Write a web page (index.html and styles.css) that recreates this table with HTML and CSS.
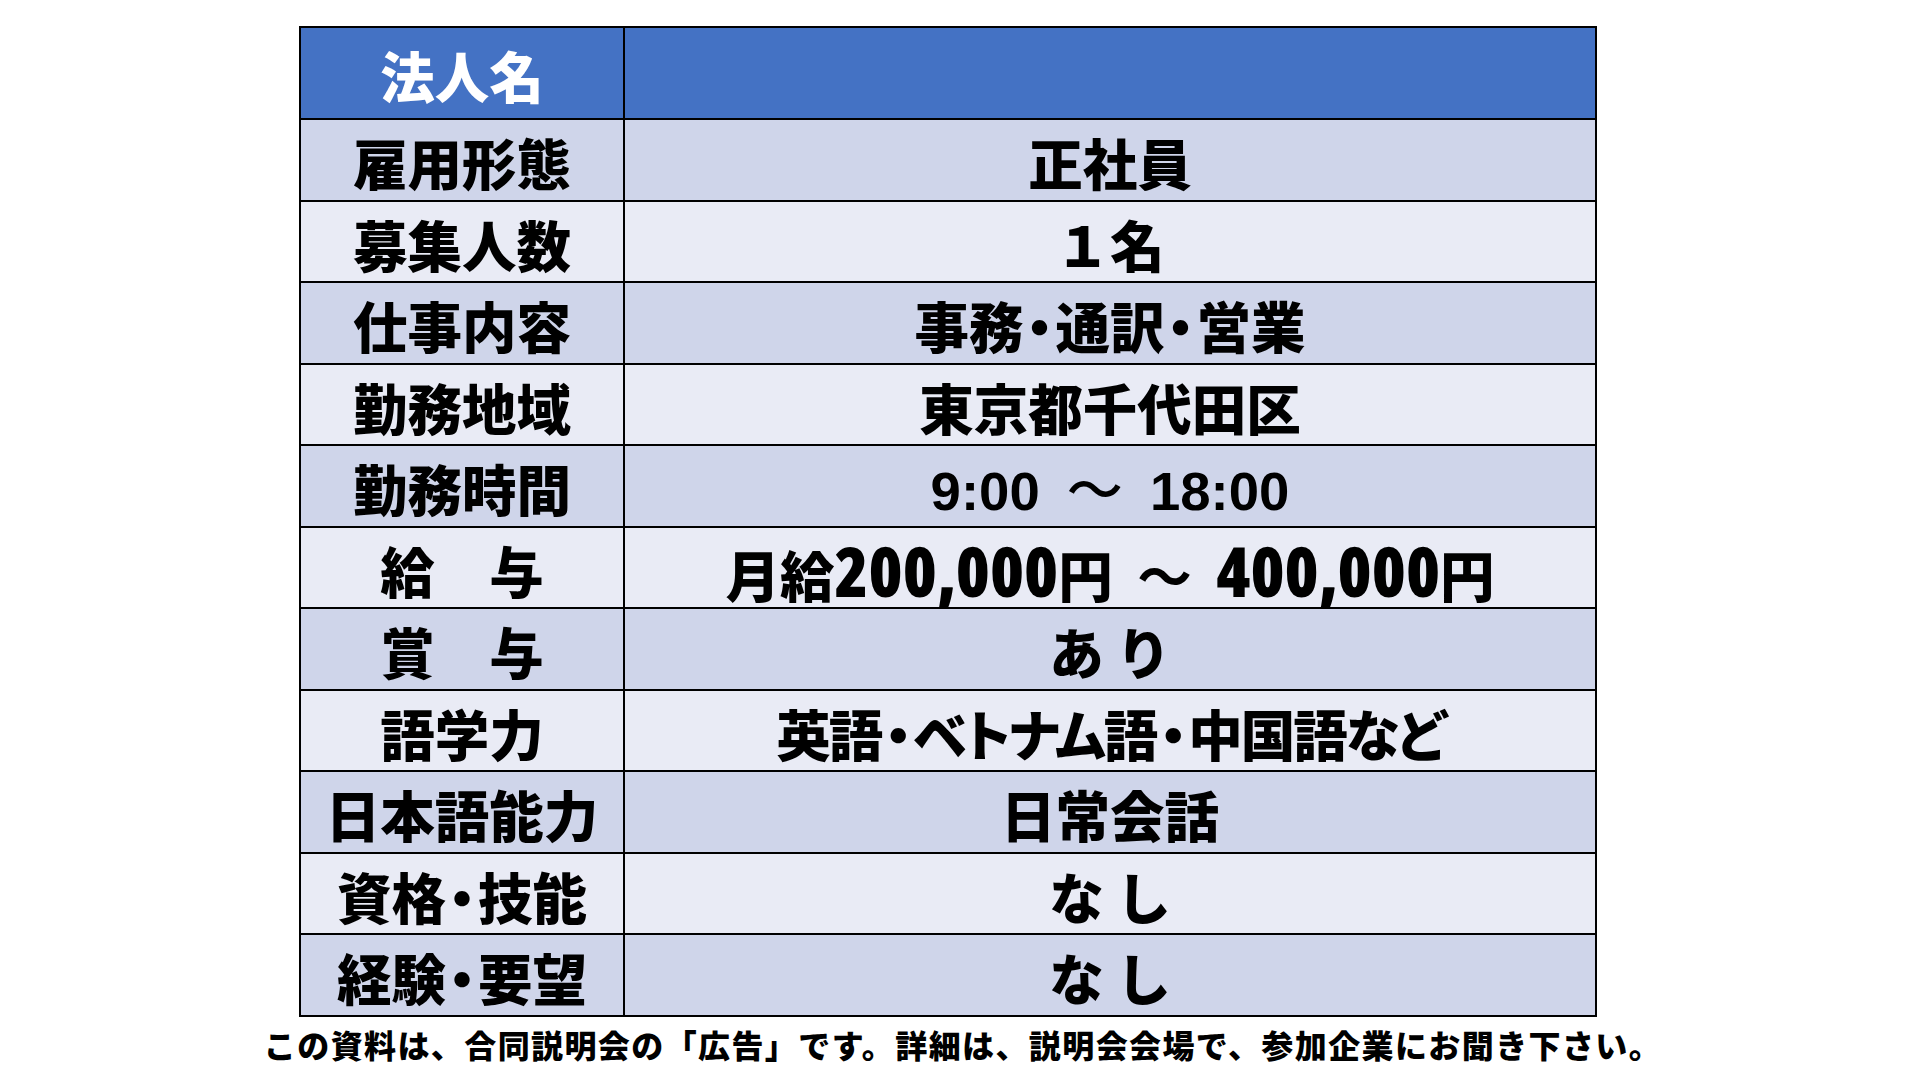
FILE: index.html
```html
<!DOCTYPE html>
<html lang="ja">
<head>
<meta charset="utf-8">
<title>求人票</title>
<link rel="stylesheet" href="styles.css">
</head>
<body>
<div class="page">
  <table class="job">
    <tr class="head">
      <th class="label">法人名</th>
      <th class="value"></th>
    </tr>
    <tr class="odd"><td class="label">雇用形態</td><td class="value">正社員</td></tr>
    <tr class="even"><td class="label">募集人数</td><td class="value">１名</td></tr>
    <tr class="odd"><td class="label">仕事内容</td><td class="value">事務<span class="dot">・</span>通訳<span class="dot">・</span>営業</td></tr>
    <tr class="even"><td class="label">勤務地域</td><td class="value">東京都千代田区</td></tr>
    <tr class="odd"><td class="label">勤務時間</td><td class="value time">9:00 <span class="wave">～</span> 18:00</td></tr>
    <tr class="even"><td class="label">給　与</td><td class="value">月給<span class="num">200,000</span>円 <span class="wave2">～</span> <span class="num">400,000</span>円</td></tr>
    <tr class="odd"><td class="label">賞　与</td><td class="value">あ り</td></tr>
    <tr class="even"><td class="label">語学力</td><td class="value prop">英語<span class="dot">・</span>ベトナム語<span class="dot">・</span>中国語など</td></tr>
    <tr class="odd"><td class="label">日本語能力</td><td class="value">日常会話</td></tr>
    <tr class="even"><td class="label">資格<span class="dot">・</span>技能</td><td class="value">な し</td></tr>
    <tr class="odd"><td class="label">経験<span class="dot">・</span>要望</td><td class="value">な し</td></tr>
  </table>
  <p class="note">この資料は、合同説明会の「広告」です。詳細は、説明会会場で、参加企業にお聞き下さい。</p>
</div>
</body>
</html>
```

FILE: styles.css
```css
html, body {
  margin: 0;
  padding: 0;
  background: #ffffff;
}

body {
  width: 1920px;
  height: 1080px;
  overflow: hidden;
  font-family: "Noto Sans CJK JP", "Noto Sans", sans-serif;
  color: #000000;
}

.page {
  padding-top: 26px;
}

.job {
  margin-left: 299px;
  width: 1298px;
  border-collapse: collapse;
  table-layout: fixed;
}

.job th,
.job td {
  border: 2px solid #000000;
  padding: 5px 0 0 0;
  text-align: center;
  vertical-align: middle;
  font-size: 54.5px;
  font-weight: 900;
  line-height: 1;
  white-space: nowrap;
}

.job .label {
  width: 322px;
}

.head th {
  background: #4472c4;
  color: #ffffff;
  height: 85px;
}

.odd td {
  background: #cfd5ea;
  height: 74.55px;
}

.even td {
  background: #e9ebf5;
  height: 74.55px;
}

.dot {
  display: inline-block;
  width: 32px;
  text-align: center;
  font-feature-settings: "palt";
}

.prop {
  font-feature-settings: "palt";
  letter-spacing: -2px;
}

.time {
  font-family: "Liberation Sans", "Noto Sans CJK JP", sans-serif;
  font-size: 69px;
  font-weight: 400;
  word-spacing: 12px;
}

.wave {
  font-family: "Noto Sans CJK JP", sans-serif;
  font-weight: 500;
  font-size: 56px;
}

.num {
  font-family: "Open Sans", "Liberation Sans", sans-serif;
  font-stretch: 75%;
  font-weight: 800;
  font-size: 69px;
}

.wave2 {
  font-weight: 700;
  margin: 0 12px;
}

.note {
  margin: 0;
  padding: 7px 0 0 6px;
  text-align: center;
  font-size: 32px;
  line-height: 40px;
  font-weight: 900;
  letter-spacing: 1.4px;
}
```
